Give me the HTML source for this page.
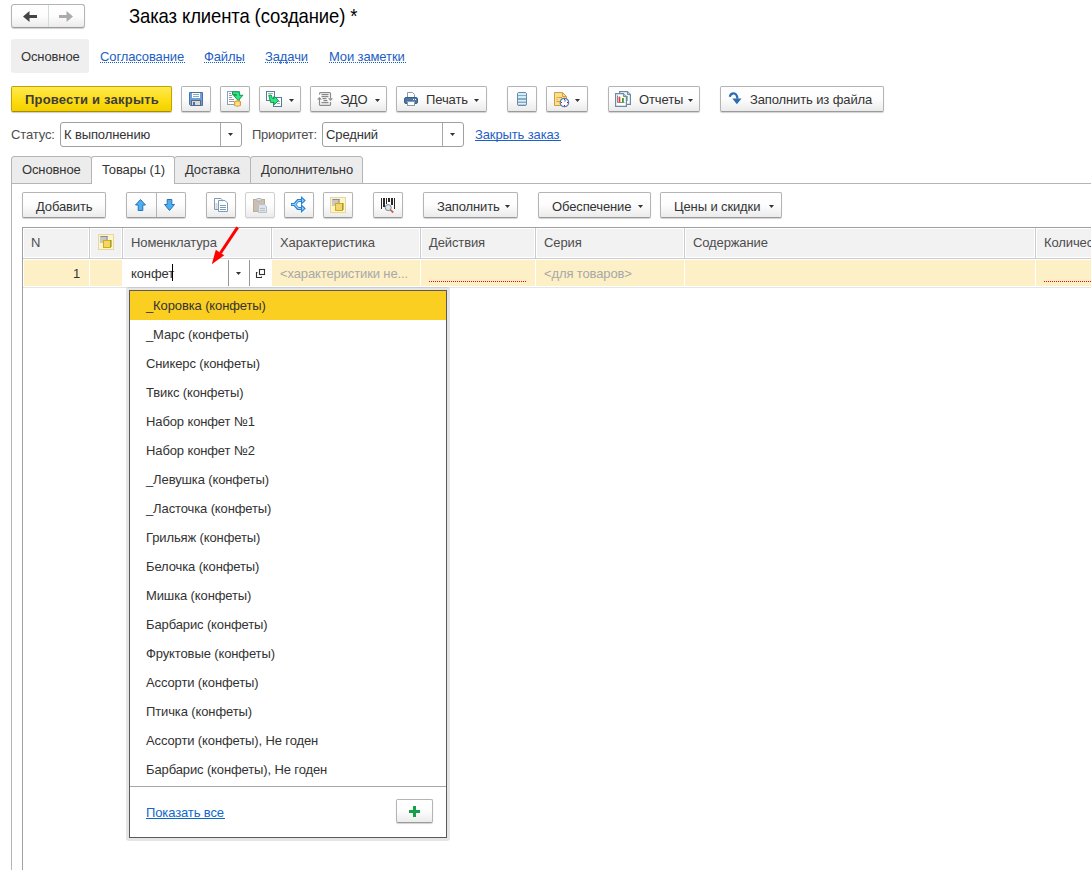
<!DOCTYPE html>
<html><head><meta charset="utf-8">
<style>
*{box-sizing:border-box;margin:0;padding:0}
html,body{width:1091px;height:870px;overflow:hidden;background:#fff}
body{position:relative;font-family:"Liberation Sans",sans-serif;font-size:13px;letter-spacing:-0.12px;color:#333;line-height:15px}
.a{position:absolute}
.t{position:absolute;white-space:nowrap;line-height:15px}
.nt{transform:none;margin-top:0}
.btn{position:absolute;border:1px solid #b4b4b4;border-bottom-color:#9a9a9a;border-radius:2px;background:linear-gradient(#fff 0%,#fdfdfd 50%,#ebebeb 100%);box-shadow:0 1px 1px rgba(0,0,0,0.18)}
.lnk{color:#1c5ec4;text-decoration:underline dotted;text-underline-offset:2px}
.lk2{color:#0f67c9;text-decoration:underline;text-underline-offset:2px}
.inp{position:absolute;border:1px solid #a0a0a0;border-radius:3px;background:#fff}
svg{position:absolute;overflow:visible}
</style></head><body>
<div class="btn" style="left:11px;top:4px;width:74px;height:24px;border-radius:3px"></div>
<div class="a" style="left:48px;top:5px;width:1px;height:22px;background:#d3dbe2;"></div>
<svg style="left:23px;top:11px" width="14" height="11"><path d="M0 5.5L6.5 0V4H14V7H6.5V11Z" fill="#454545"/></svg>
<svg style="left:59px;top:11px" width="14" height="11"><path d="M14 5.5L7.5 0V4H0V7H7.5V11Z" fill="#ababab"/></svg>
<div class="t" style="left:129px;top:6px;font-size:18.5px;line-height:20px;color:#000;transform:scaleY(1.077);transform-origin:0 3px">Заказ клиента (создание) *</div>
<div class="a" style="left:11px;top:39px;width:78px;height:34px;background:#efefef;border-radius:3px"></div>
<div class="t" style="left:21px;top:49px;">Основное</div>
<div class="t" style="left:100px;top:49px;color:#1c5ec4">Согласование</div>
<div class="a" style="left:100px;top:62px;width:85px;height:1px;background:repeating-linear-gradient(90deg,#1c5ec4 0 1px,transparent 1px 2px)"></div>
<div class="t" style="left:204px;top:49px;color:#1c5ec4">Файлы</div>
<div class="a" style="left:204px;top:62px;width:41px;height:1px;background:repeating-linear-gradient(90deg,#1c5ec4 0 1px,transparent 1px 2px)"></div>
<div class="t" style="left:265px;top:49px;color:#1c5ec4">Задачи</div>
<div class="a" style="left:265px;top:62px;width:44px;height:1px;background:repeating-linear-gradient(90deg,#1c5ec4 0 1px,transparent 1px 2px)"></div>
<div class="t" style="left:329px;top:49px;color:#1c5ec4">Мои заметки</div>
<div class="a" style="left:329px;top:62px;width:77px;height:1px;background:repeating-linear-gradient(90deg,#1c5ec4 0 1px,transparent 1px 2px)"></div>
<div class="a" style="left:11px;top:86px;width:161px;height:26px;border:1px solid #c3a300;border-bottom-color:#a88c00;border-radius:2px;background:linear-gradient(#ffe94f,#fcdc10 60%,#f3d000);box-shadow:0 1px 1px rgba(0,0,0,0.2)"></div>
<div class="t" style="left:25px;top:92px;font-weight:bold;color:#3c3c3c;letter-spacing:0.2px">Провести и закрыть</div>
<div class="btn" style="left:181px;top:86px;width:30px;height:26px;"></div>
<svg style="left:189px;top:92px" width="14" height="14" viewBox="0 0 14 14">
<path d="M0.5 0.5H13.5V13.5H1.5L0.5 12.5Z" fill="#6d9fd8" stroke="#4a70a8"/>
<rect x="3" y="1" width="8" height="5" fill="#fff"/>
<rect x="4" y="2" width="6" height="1" fill="#8aa8c8"/><rect x="4" y="4" width="6" height="1" fill="#8aa8c8"/>
<rect x="2.5" y="8.5" width="9" height="5" fill="#d8d8d8" stroke="#5a6a7a"/>
<rect x="4" y="10" width="2" height="3" fill="#3a70c0"/>
</svg>
<div class="btn" style="left:220px;top:86px;width:30px;height:26px;"></div>
<svg style="left:227px;top:91px" width="16" height="16" viewBox="0 0 16 16">
<rect x="0.5" y="0.5" width="12" height="13" fill="#fff" stroke="#86a2bc"/>
<rect x="2" y="2" width="2" height="1" fill="#9a9a9a"/><rect x="2" y="4" width="3" height="1" fill="#9a9a9a"/><rect x="2" y="6" width="3" height="1" fill="#9a9a9a"/><rect x="2" y="8" width="5" height="1" fill="#9a9a9a"/><rect x="2" y="10" width="5" height="1" fill="#9a9a9a"/>
<path d="M5.5 0.8H10.8Q12.6 0.8 12.6 2.6V4.3H15.8L11.2 9.6L6.6 4.3H9.6V3.6H5.5Z" fill="#2ee68a" stroke="#0c9c42" stroke-width="1" stroke-linejoin="miter"/>
<path d="M7.5 10.5Q10.5 9 13.5 10.5V14.5Q10.5 16 7.5 14.5Z" fill="#f5c866" stroke="#e09a30"/>
<rect x="8.5" y="11.5" width="4" height="1" fill="#fff0b0"/><rect x="8.5" y="13.2" width="4" height="1" fill="#fff0b0"/>
</svg>
<div class="btn" style="left:259px;top:86px;width:42px;height:26px;"></div>
<svg style="left:266px;top:91px" width="17" height="16" viewBox="0 0 17 16">
<rect x="0.5" y="0.5" width="8" height="9" fill="#fff" stroke="#5a7aa4"/>
<rect x="2" y="2" width="5" height="1" fill="#aaa"/>
<rect x="7.5" y="6.5" width="8" height="9" fill="#fff" stroke="#5a7aa4"/>
<rect x="11" y="10" width="3" height="1" fill="#aaa"/><rect x="11" y="12" width="3" height="1" fill="#aaa"/>
<path d="M2.8 4.2H5.4L6.4 7.6H8V5.2L12.6 9.5L8 13.8V11.4H4.6Z" fill="#2ee68a" stroke="#0c9c42" stroke-linejoin="miter"/>
</svg>
<svg style="left:289px;top:99px" width="5" height="3"><path d="M0 0H5L2.5 3Z" fill="#333"/></svg>
<div class="btn" style="left:310px;top:86px;width:77px;height:26px;"></div>
<svg style="left:317px;top:92px" width="16" height="14" viewBox="0 0 16 14" fill="none" stroke="#8a8a8a" stroke-width="1.2">
<path d="M2.5 2.5V1.5Q2.5 0.6 3.5 0.6H12.5Q13.5 0.6 13.5 1.5V6"/>
<path d="M13.5 10V12.5Q13.5 13.4 12.5 13.4H3.5Q2.5 13.4 2.5 12.5V7"/>
<path d="M4.5 2.6H11.5M4.5 4.6H11.5M5.5 6.6H9.5M6.5 8.6H10.5M4.5 10.6H11.5"/>
<path d="M0 7.6L2.5 5L5 7.6Z" fill="#8a8a8a" stroke="none"/>
<path d="M11 6.3H16L13.5 9Z" fill="#8a8a8a" stroke="none"/>
</svg>
<div class="t" style="left:340px;top:92px;">ЭДО</div>
<svg style="left:375px;top:99px" width="5" height="3"><path d="M0 0H5L2.5 3Z" fill="#333"/></svg>
<div class="btn" style="left:396px;top:86px;width:91px;height:26px;"></div>
<svg style="left:404px;top:92px" width="14" height="14" viewBox="0 0 14 14">
<path d="M3.5 0.5H8.5L10.5 2.5V6H3.5Z" fill="#fff" stroke="#8a9aaa"/>
<rect x="0.5" y="5.5" width="13" height="6" rx="1.5" fill="#4d76a6" stroke="#3a5f8a"/>
<rect x="9" y="7" width="1" height="1" fill="#fff"/><rect x="11" y="7" width="1" height="1" fill="#fff"/>
<rect x="3.5" y="9.5" width="7" height="4" fill="#fff" stroke="#8a9aaa"/>
</svg>
<div class="t" style="left:426px;top:92px;">Печать</div>
<svg style="left:474px;top:99px" width="5" height="3"><path d="M0 0H5L2.5 3Z" fill="#333"/></svg>
<div class="btn" style="left:507px;top:86px;width:30px;height:26px;"></div>
<svg style="left:517px;top:92px" width="10" height="14" viewBox="0 0 10 14">
<rect x="0.5" y="0.5" width="9" height="13" rx="1.5" fill="#8eaac2" stroke="#6b8aa8"/>
<rect x="1" y="1" width="8" height="2" fill="#cdeff9"/><rect x="1" y="4" width="8" height="2" fill="#cdeff9"/><rect x="1" y="8" width="8" height="1.5" fill="#d8f2fa"/><rect x="1" y="11" width="8" height="1.5" fill="#d8f2fa"/>
</svg>
<div class="btn" style="left:546px;top:86px;width:42px;height:26px;"></div>
<svg style="left:554px;top:92px" width="15" height="15" viewBox="0 0 15 15">
<path d="M0.5 0.5H8.5L12.5 4.5V13.5H0.5Z" fill="#f8e08c" stroke="#d89a40"/>
<path d="M8.5 0.5V4.5H12.5" fill="none" stroke="#d89a40"/>
<rect x="2.5" y="5" width="2" height="1" fill="#d89a40"/><rect x="5" y="5" width="3" height="1" fill="#d89a40"/><rect x="2.5" y="7" width="1" height="1" fill="#d89a40"/><rect x="2.5" y="9" width="3" height="1" fill="#d89a40"/>
<circle cx="10.4" cy="10.5" r="4.2" fill="#fff" stroke="#4a7fb8" stroke-width="1.3"/>
<path d="M10.4 10.5V7.5L12.5 8.5Z" fill="#7aaae0"/>
<rect x="10" y="7" width="1" height="1" fill="#f00"/><rect x="10" y="13" width="1" height="1" fill="#f00"/><rect x="7" y="10" width="1" height="1" fill="#f00"/><rect x="13" y="10" width="1" height="1" fill="#f00"/>
</svg>
<svg style="left:575px;top:99px" width="5" height="3"><path d="M0 0H5L2.5 3Z" fill="#333"/></svg>
<div class="btn" style="left:608px;top:86px;width:92px;height:26px;"></div>
<svg style="left:615px;top:91px" width="16" height="16" viewBox="0 0 16 16">
<path d="M4.6 0.6H12.4L15.4 3.6V13.4H4.6Z" fill="#fff" stroke="#6a8aa5" stroke-width="1.2"/>
<path d="M12.4 0.6V3.6H15.4" fill="#b8c8d8" stroke="#6a8aa5" stroke-width="1"/>
<rect x="11" y="5" width="1.6" height="5" fill="#3aa040"/>
<path d="M0.6 2.6H8.4L11.4 5.6V15.4H0.6Z" fill="#fff" stroke="#6a8aa5" stroke-width="1.2"/>
<path d="M8.4 2.6V5.6H11.4" fill="#b8c8d8" stroke="#6a8aa5" stroke-width="1"/>
<path d="M2.5 4.5V11.5H9.5" fill="none" stroke="#888" stroke-width="1"/>
<rect x="3.6" y="5.6" width="1.6" height="5.4" fill="#f23a30"/><rect x="5.2" y="6.2" width="0.8" height="4.8" fill="#f8b890"/>
<rect x="7" y="7" width="1.8" height="4" fill="#3a9a30"/>
</svg>
<div class="t" style="left:639px;top:92px;">Отчеты</div>
<svg style="left:688px;top:99px" width="5" height="3"><path d="M0 0H5L2.5 3Z" fill="#333"/></svg>
<div class="btn" style="left:720px;top:86px;width:164px;height:26px;"></div>
<svg style="left:729px;top:93px" width="13" height="12" viewBox="0 0 13 12">
<path d="M0.8 3.8Q1.5 0.2 4.8 0.3Q7.8 0.4 8.5 5.6" fill="none" stroke="#2a6db5" stroke-width="2.2"/>
<path d="M3.3 5.6H12.5L7.9 11.2Z" fill="#2a6db5"/>
</svg>
<div class="t" style="left:750px;top:92px;">Заполнить из файла</div>
<div class="t" style="left:11px;top:127px;color:#4d4d4d;letter-spacing:-0.12px">Статус:</div>
<div class="inp" style="left:60px;top:122px;width:182px;height:25px"></div>
<div class="a" style="left:220px;top:123px;width:1px;height:23px;background:#a8a8a8;"></div>
<div class="t" style="left:64px;top:127px;">К выполнению</div>
<svg style="left:228px;top:133px" width="5" height="3"><path d="M0 0H5L2.5 3Z" fill="#333"/></svg>
<div class="t" style="left:252px;top:127px;color:#4d4d4d;letter-spacing:-0.3px">Приоритет:</div>
<div class="inp" style="left:322px;top:122px;width:142px;height:25px"></div>
<div class="a" style="left:442px;top:123px;width:1px;height:23px;background:#a8a8a8;"></div>
<div class="t" style="left:326px;top:127px;">Средний</div>
<svg style="left:450px;top:133px" width="5" height="3"><path d="M0 0H5L2.5 3Z" fill="#333"/></svg>
<div class="t" style="left:475px;top:127px;color:#1f5fc6">Закрыть заказ</div>
<div class="a" style="left:475px;top:140px;width:86px;height:1px;background:#1f5fc6"></div>
<div class="a" style="left:11px;top:183px;width:1080px;height:1px;background:#b5b5b5;"></div>
<div class="a" style="left:11px;top:183px;width:1px;height:687px;background:#b5b5b5;"></div>
<div class="a" style="left:11px;top:156px;width:81px;height:28px;background:#ececec;border:1px solid #b5b5b5;border-radius:3px 3px 0 0"></div>
<div class="a" style="left:91px;top:156px;width:84px;border-bottom:none;height:28px;background:#fff;border:1px solid #b5b5b5;border-bottom:none;border-radius:3px 3px 0 0"></div>
<div class="a" style="left:174px;top:156px;width:77px;height:28px;background:#ececec;border:1px solid #b5b5b5;border-radius:3px 3px 0 0"></div>
<div class="a" style="left:250px;top:156px;width:113px;height:28px;background:#ececec;border:1px solid #b5b5b5;border-radius:3px 3px 0 0"></div>
<div class="t" style="left:22px;top:162px;">Основное</div>
<div class="t" style="left:102px;top:162px;">Товары (1)</div>
<div class="t" style="left:185px;top:162px;">Доставка</div>
<div class="t" style="left:261px;top:162px;">Дополнительно</div>
<div class="btn" style="left:22px;top:192px;width:84px;height:26px;"></div>
<div class="t" style="left:36px;top:199px;">Добавить</div>
<div class="btn" style="left:126px;top:192px;width:60px;height:26px;"></div>
<div class="a" style="left:156px;top:193px;width:1px;height:24px;background:#b4b4b4;"></div>
<svg style="left:135px;top:199px" width="11" height="12" viewBox="0 0 11 12"><path d="M5.5 0.5L10.5 6H7.8V11.5H3.2V6H0.5Z" fill="#4cb0f0" stroke="#2a70b8" stroke-linejoin="miter"/></svg>
<svg style="left:164px;top:199px" width="11" height="12" viewBox="0 0 11 12"><path d="M5.5 11.5L10.5 5.5H7.8V0.5H3.2V5.5H0.5Z" fill="#4cb0f0" stroke="#2a70b8" stroke-linejoin="miter"/></svg>
<div class="btn" style="left:206px;top:192px;width:30px;height:26px;"></div>
<svg style="left:214px;top:198px" width="14" height="14" viewBox="0 0 14 14">
<path d="M0.5 0.5H7L8.5 2V11.5H0.5Z" fill="#fff" stroke="#7e9db5"/>
<rect x="1.5" y="5.5" width="2" height="1" fill="#9ab"/><rect x="1.5" y="7.5" width="2" height="1" fill="#9ab"/><rect x="1.5" y="9.5" width="2" height="1" fill="#9ab"/>
<path d="M4.5 2.5H11L13.5 5V13.5H4.5Z" fill="#fff" stroke="#7e9db5"/>
<rect x="6" y="7" width="6" height="1" fill="#7e9db5"/><rect x="6" y="9" width="6" height="1" fill="#7e9db5"/><rect x="6" y="11" width="6" height="1" fill="#7e9db5"/>
</svg>
<div class="btn" style="left:245px;top:192px;width:30px;height:26px;border-color:#d0d0d0;box-shadow:0 1px 1px rgba(0,0,0,0.08)"></div>
<svg style="left:253px;top:198px" width="14" height="15" viewBox="0 0 14 15">
<rect x="0.5" y="1.5" width="11" height="12" fill="#cbbfb0" stroke="#b8ab9c"/>
<rect x="3.5" y="0.5" width="5" height="2.5" rx="1" fill="#e0e0e0" stroke="#b0b0b0"/>
<path d="M5.5 6.5H11.5L13.5 8.5V14.5H5.5Z" fill="#dde3ea" stroke="#b8c2cc"/>
<rect x="7" y="10" width="5" height="1" fill="#b8c2cc"/><rect x="7" y="12" width="5" height="1" fill="#b8c2cc"/>
</svg>
<div class="btn" style="left:284px;top:192px;width:30px;height:26px;"></div>
<svg style="left:288px;top:194px" width="20" height="20" viewBox="0 0 20 20">
<path d="M3 10.5H6.5L10 6.5H14M6.5 10.5L10 14.5H14" fill="none" stroke="#2a7fd0" stroke-width="3.2" stroke-linejoin="miter"/>
<path d="M3.8 10.5H6.8L10.3 6.5H14M6.8 10.5L10.3 14.5H14" fill="none" stroke="#98d4fa" stroke-width="1.2"/>
<path d="M13.5 3.2L17 6.5L13.5 9.8Z M13.5 11.2L17 14.5L13.5 17.8Z" fill="#98d4fa" stroke="#2a7fd0" stroke-width="1.1" stroke-linejoin="miter"/>
</svg>
<div class="btn" style="left:323px;top:192px;width:30px;height:26px;"></div>
<svg style="left:330px;top:197px" width="16" height="16" viewBox="0 0 16 16">
<rect x="0.5" y="0.5" width="15" height="15" fill="#fdf3cc" stroke="#e6d8a0"/>
<rect x="2" y="2" width="7.5" height="7" fill="#c8c8c8"/><rect x="2.5" y="2" width="7" height="1" fill="#8c8c8c"/><rect x="8.5" y="2" width="1" height="6" fill="#8c8c8c"/>
<rect x="5.5" y="6.5" width="7" height="7" fill="#f2d470" stroke="#d2b000"/>
<rect x="12.5" y="6" width="1" height="7" fill="#8c8a20"/>
</svg>
<div class="btn" style="left:373px;top:192px;width:30px;height:26px;"></div>
<svg style="left:381px;top:198px" width="15" height="15" viewBox="0 0 15 15">
<rect x="0" y="0" width="1" height="11" fill="#2a2a2a"/><rect x="2" y="0" width="2" height="9" fill="#2a2a2a"/><rect x="5" y="0" width="1" height="6" fill="#2a2a2a"/><rect x="7" y="0" width="2" height="4" fill="#2a2a2a"/><rect x="10" y="0" width="2" height="7" fill="#2a2a2a"/><rect x="13" y="0" width="1" height="11" fill="#2a2a2a"/>
<circle cx="7.2" cy="9.6" r="3" fill="#c8eef8" stroke="#9a7a80" stroke-width="1"/>
<path d="M9.4 11.8L12.3 14.5" stroke="#c86a40" stroke-width="1.8"/>
</svg>
<div class="btn" style="left:423px;top:192px;width:95px;height:26px;"></div>
<div class="t" style="left:437px;top:199px;">Заполнить</div>
<svg style="left:505px;top:205px" width="5" height="3"><path d="M0 0H5L2.5 3Z" fill="#333"/></svg>
<div class="btn" style="left:538px;top:192px;width:113px;height:26px;"></div>
<div class="t" style="left:552px;top:199px;">Обеспечение</div>
<svg style="left:638px;top:205px" width="5" height="3"><path d="M0 0H5L2.5 3Z" fill="#333"/></svg>
<div class="btn" style="left:660px;top:192px;width:122px;height:26px;"></div>
<div class="t" style="left:674px;top:199px;">Цены и скидки</div>
<svg style="left:769px;top:205px" width="5" height="3"><path d="M0 0H5L2.5 3Z" fill="#333"/></svg>
<div class="a" style="left:22px;top:227px;width:1069px;height:1px;background:#a0a0a0;"></div>
<div class="a" style="left:22px;top:227px;width:1px;height:643px;background:#a0a0a0;"></div>
<div class="a" style="left:23px;top:228px;width:1068px;height:30px;background:#ffffff;"></div>
<div class="a" style="left:24px;top:229px;width:1067px;height:28px;background:#f2f2f2;"></div>
<div class="a" style="left:23px;top:258px;width:1068px;height:1px;background:#cccccc;"></div>
<div class="a" style="left:23px;top:259px;width:1068px;height:28px;background:#ffffff;"></div>
<div class="a" style="left:24px;top:260px;width:1067px;height:26px;background:#fdf0c6;"></div>
<div class="a" style="left:23px;top:287px;width:1068px;height:1px;background:#e4e4e4;"></div>
<div class="a" style="left:88px;top:228px;width:3px;height:30px;background:#ffffff;"></div>
<div class="a" style="left:89px;top:228px;width:1px;height:30px;background:#cccccc;"></div>
<div class="a" style="left:89px;top:259px;width:1px;height:28px;background:#ffffff;"></div>
<div class="a" style="left:121px;top:228px;width:3px;height:30px;background:#ffffff;"></div>
<div class="a" style="left:122px;top:228px;width:1px;height:30px;background:#cccccc;"></div>
<div class="a" style="left:122px;top:259px;width:1px;height:28px;background:#ffffff;"></div>
<div class="a" style="left:270px;top:228px;width:3px;height:30px;background:#ffffff;"></div>
<div class="a" style="left:271px;top:228px;width:1px;height:30px;background:#cccccc;"></div>
<div class="a" style="left:271px;top:259px;width:1px;height:28px;background:#ffffff;"></div>
<div class="a" style="left:419px;top:228px;width:3px;height:30px;background:#ffffff;"></div>
<div class="a" style="left:420px;top:228px;width:1px;height:30px;background:#cccccc;"></div>
<div class="a" style="left:420px;top:259px;width:1px;height:28px;background:#ffffff;"></div>
<div class="a" style="left:534px;top:228px;width:3px;height:30px;background:#ffffff;"></div>
<div class="a" style="left:535px;top:228px;width:1px;height:30px;background:#cccccc;"></div>
<div class="a" style="left:535px;top:259px;width:1px;height:28px;background:#ffffff;"></div>
<div class="a" style="left:683px;top:228px;width:3px;height:30px;background:#ffffff;"></div>
<div class="a" style="left:684px;top:228px;width:1px;height:30px;background:#cccccc;"></div>
<div class="a" style="left:684px;top:259px;width:1px;height:28px;background:#ffffff;"></div>
<div class="a" style="left:1034px;top:228px;width:3px;height:30px;background:#ffffff;"></div>
<div class="a" style="left:1035px;top:228px;width:1px;height:30px;background:#cccccc;"></div>
<div class="a" style="left:1035px;top:259px;width:1px;height:28px;background:#ffffff;"></div>
<svg style="left:98px;top:234px" width="16" height="16" viewBox="0 0 16 16">
<rect x="0.5" y="0.5" width="15" height="15" fill="#fdf3cc" stroke="#e6d8a0"/>
<rect x="2" y="2" width="7.5" height="7" fill="#c8c8c8"/><rect x="2.5" y="2" width="7" height="1" fill="#8c8c8c"/><rect x="8.5" y="2" width="1" height="6" fill="#8c8c8c"/>
<rect x="5.5" y="6.5" width="7" height="7" fill="#f2d470" stroke="#d2b000"/>
<rect x="12.5" y="6" width="1" height="7" fill="#8c8a20"/>
</svg>
<div class="t" style="left:31px;top:235px;color:#4d4d4d">N</div>
<div class="t" style="left:131px;top:235px;color:#4d4d4d">Номенклатура</div>
<div class="t" style="left:280px;top:235px;color:#4d4d4d">Характеристика</div>
<div class="t" style="left:429px;top:235px;color:#4d4d4d">Действия</div>
<div class="t" style="left:544px;top:235px;color:#4d4d4d">Серия</div>
<div class="t" style="left:693px;top:235px;color:#4d4d4d">Содержание</div>
<div class="t" style="left:1044px;top:235px;color:#4d4d4d">Количество</div>
<div class="t" style="left:73px;top:266px;">1</div>
<div class="a" style="left:122px;top:259px;width:150px;height:28px;background:#fff;"></div>
<div class="a" style="left:228px;top:260px;width:1px;height:26px;background:#959595;"></div>
<div class="a" style="left:249px;top:260px;width:1px;height:26px;background:#959595;"></div>
<div class="t" style="left:131px;top:266px;">конфет</div>
<div class="a" style="left:172px;top:264px;width:1px;height:17px;background:#000;"></div>
<svg style="left:236px;top:272px" width="5" height="3"><path d="M0 0H5L2.5 3Z" fill="#333"/></svg>
<svg style="left:256px;top:269px" width="9" height="9" viewBox="0 0 9 9" fill="none" stroke="#333" stroke-width="1.1">
<rect x="3.5" y="0.5" width="5" height="5"/>
<path d="M1.5 3.5H0.5V8.5H5.5V7.5"/>
</svg>
<div class="t" style="left:280px;top:266px;color:#a8a8a8">&lt;характеристики не...</div>
<div class="t" style="left:544px;top:266px;color:#a8a8a8">&lt;для товаров&gt;</div>
<div class="a" style="left:429px;top:281px;width:98px;height:1px;background:repeating-linear-gradient(90deg,#f00 0 1px,transparent 1px 2px)"></div>
<div class="a" style="left:1044px;top:281px;width:47px;height:1px;background:repeating-linear-gradient(90deg,#f00 0 1px,transparent 1px 2px)"></div>
<svg style="left:205px;top:222px" width="40" height="46" viewBox="205 222 40 46">
<path d="M237.6 227.3L220.5 253" stroke="#ff0000" stroke-width="3"/>
<path d="M211.8 264.2L215.8 249.8L224.2 255.2Z" fill="#ff0000"/>
</svg>
<div class="a" style="left:126px;top:287px;width:324px;height:554px;background:rgba(0,0,0,0.1);border-radius:3px"></div>
<div class="a" style="left:129px;top:290px;width:318px;height:548px;border:1px solid #5a5a5a;background:#fff"></div>
<div class="a" style="left:130px;top:291px;width:316px;height:29px;background:#fbcf22;"></div>
<div class="t" style="left:146px;top:298px;">_Коровка (конфеты)</div>
<div class="t" style="left:146px;top:327px;">_Марс (конфеты)</div>
<div class="t" style="left:146px;top:356px;">Сникерс (конфеты)</div>
<div class="t" style="left:146px;top:385px;">Твикс (конфеты)</div>
<div class="t" style="left:146px;top:414px;">Набор конфет №1</div>
<div class="t" style="left:146px;top:443px;">Набор конфет №2</div>
<div class="t" style="left:146px;top:472px;">_Левушка (конфеты)</div>
<div class="t" style="left:146px;top:501px;">_Ласточка (конфеты)</div>
<div class="t" style="left:146px;top:530px;">Грильяж (конфеты)</div>
<div class="t" style="left:146px;top:559px;">Белочка (конфеты)</div>
<div class="t" style="left:146px;top:588px;">Мишка (конфеты)</div>
<div class="t" style="left:146px;top:617px;">Барбарис (конфеты)</div>
<div class="t" style="left:146px;top:646px;">Фруктовые (конфеты)</div>
<div class="t" style="left:146px;top:675px;">Ассорти (конфеты)</div>
<div class="t" style="left:146px;top:704px;">Птичка (конфеты)</div>
<div class="t" style="left:146px;top:733px;">Ассорти (конфеты), Не годен</div>
<div class="t" style="left:146px;top:762px;">Барбарис (конфеты), Не годен</div>
<div class="a" style="left:130px;top:786px;width:316px;height:1px;background:#a8a8a8;"></div>
<div class="t" style="left:146px;top:805px;color:#0f67c9">Показать все</div>
<div class="a" style="left:146px;top:818px;width:79px;height:1px;background:#0f67c9"></div>
<div class="btn" style="left:396px;top:799px;width:37px;height:24px;"></div>
<svg style="left:409px;top:806px" width="11" height="11" viewBox="0 0 11 11"><path d="M4 0h3v4h4v3h-4v4h-3v-4h-4v-3h4z" fill="#17a04a"/></svg>
</body></html>
